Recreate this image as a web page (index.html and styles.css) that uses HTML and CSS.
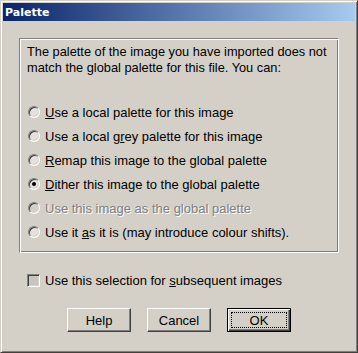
FILE: index.html
```html
<!DOCTYPE html>
<html>
<head>
<meta charset="utf-8">
<link rel="stylesheet" href="styles.css">
</head>
<body>
<div class="window">
  <div class="titlebar"><span class="title">Palette</span></div>
  <div class="content">
    <fieldset class="group">
      <p class="intro">The palette of the image you have imported does not<br>match the global palette for this file. You can:</p>
      <div class="options">
        <label class="row"><span class="radio"></span><span class="lbl"><u>U</u>se a local palette for this image</span></label>
        <label class="row"><span class="radio"></span><span class="lbl">Use a local g<u>r</u>ey palette for this image</span></label>
        <label class="row"><span class="radio"></span><span class="lbl"><u>R</u>emap this image to the global palette</span></label>
        <label class="row"><span class="radio checked"></span><span class="lbl"><u>D</u>ither this image to the global palette</span></label>
        <label class="row disabled"><span class="radio"></span><span class="lbl">Use this image as the <u>g</u>lobal palette</span></label>
        <label class="row"><span class="radio"></span><span class="lbl">Use it <u>a</u>s it is (may introduce colour shifts).</span></label>
      </div>
    </fieldset>
    <label class="checkrow"><span class="checkbox"></span><span class="lbl">Use this selection for <u>s</u>ubsequent images</span></label>
    <div class="buttons">
      <button class="btn">Help</button>
      <button class="btn">Cancel</button>
      <button class="btn default"><span class="focus">OK</span></button>
    </div>
  </div>
</div>
</body>
</html>
```
FILE: styles.css
```css
html, body {
  margin: 0;
  padding: 0;
  background: #d4d0c8;
}
.window {
  box-sizing: border-box;
  width: 358px;
  height: 353px;
  background: #d4d0c8;
  border: 1px solid;
  border-color: #d4d0c8 #404040 #404040 #d4d0c8;
  box-shadow: inset 1px 1px #ffffff, inset -1px -1px #808080;
  padding: 2px;
  font-family: "Liberation Sans", Arial, sans-serif;
  font-size: 13px;
  color: #000;
}
.titlebar {
  height: 18px;
  background: linear-gradient(to right, #0a246a, #a6caf0);
  display: flex;
  align-items: center;
  padding-left: 2px;
}
.title {
  font-family: "DejaVu Sans", Tahoma, sans-serif;
  font-weight: bold;
  font-size: 11px;
  color: #fff;
}
.content {
  padding: 17px 16px 0 16px;
}
.group {
  margin: 0;
  padding: 5px 4px 8px 6px;
  width: 320px;
  box-sizing: border-box;
  border: 1px solid;
  border-color: #808080 #ffffff #ffffff #808080;
  box-shadow: inset 1px 1px #ffffff, inset -1px -1px #808080;
  min-inline-size: 0;
}
.intro {
  margin: 0 0 0 1px;
  line-height: 16px;
  font-size: 12.8px;
  white-space: nowrap;
}
.options {
  margin-top: 24px;
  display: flex;
  flex-direction: column;
}
.row {
  height: 24px;
  display: flex;
  align-items: center;
  gap: 5px;
  padding-left: 2px;
}
.radio {
  box-sizing: border-box;
  width: 12px;
  height: 12px;
  border-radius: 50%;
  border: 1px solid;
  border-color: #808080 #ffffff #ffffff #808080;
  box-shadow: inset 1px 1px #404040, inset -1px -1px #d4d0c8;
  background: #e4e2de;
  display: flex;
  align-items: center;
  justify-content: center;
  flex: none;
}
.radio.checked::after {
  content: "";
  width: 4px;
  height: 4px;
  border-radius: 50%;
  background: #000;
}
.disabled .lbl {
  color: #808080;
  text-shadow: 1px 1px #ffffff;
}
.disabled .radio {
  background: #d4d0c8;
}
.checkrow {
  margin-top: 19px;
  height: 16px;
  display: flex;
  align-items: center;
  gap: 5px;
  padding-left: 8px;
}
.checkbox {
  box-sizing: border-box;
  width: 13px;
  height: 13px;
  border: 1px solid;
  border-color: #808080 #ffffff #ffffff #808080;
  box-shadow: inset 1px 1px #404040, inset -1px -1px #d4d0c8;
  background: #c8c5bf;
  flex: none;
}
.buttons {
  margin-top: 20px;
  display: flex;
  justify-content: center;
  gap: 16px;
  margin-left: -16px;
  margin-right: -16px;
}
.btn {
  box-sizing: border-box;
  width: 64px;
  height: 24px;
  padding: 0;
  margin: 0;
  font-family: "Liberation Sans", Arial, sans-serif;
  font-size: 13px;
  color: #000;
  background: #d4d0c8;
  border: 1px solid;
  border-color: #ffffff #404040 #404040 #ffffff;
  box-shadow: inset -1px -1px #808080, inset 1px 1px #d4d0c8;
}
.btn.default {
  border: 1px solid #000;
  box-shadow: inset 1px 1px #ffffff, inset -1px -1px #404040, inset -2px -2px #808080;
  padding: 3px;
  display: flex;
}
.focus {
  flex: 1;
  border: 1px dotted #000;
  display: flex;
  align-items: center;
  justify-content: center;
}
```
